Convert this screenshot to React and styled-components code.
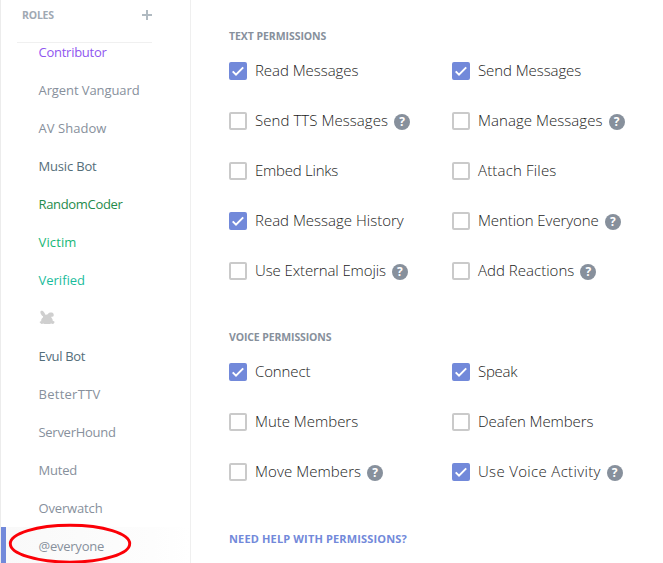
import React from "react";
import styled, { createGlobalStyle } from "styled-components";

const GlobalStyle = createGlobalStyle`
  * { box-sizing: border-box; }
  body {
    margin: 0;
    background: #fff;
    font-family: "Open Sans", "Noto Sans", sans-serif;
    overflow: hidden;
  }
`;

const Page = styled.div`
  display: flex;
  width: 663px;
  height: 563px;
  overflow: hidden;
  background: #fff;
`;

const Sidebar = styled.aside`
  position: relative;
  display: flex;
  flex-direction: column;
  flex: none;
  width: 191px;
  border-left: 1px solid #ececec;
  border-right: 1px solid #efefef;
`;

const SidebarHeader = styled.header`
  display: flex;
  flex: none;
  align-items: flex-start;
  justify-content: space-between;
  width: 135px;
  height: 43px;
  margin-left: 16px;
  padding: 8px 0 0 5px;
  border-bottom: 1px solid #f0f0f0;
`;

const Heading = styled.h2`
  margin: 0;
  font-size: 10.5px;
  line-height: 15px;
  font-weight: 700;
  letter-spacing: ${(p) => p.$track || 0}px;
  color: ${(p) => p.$color || "#87909c"};
  white-space: nowrap;
`;

const AddIcon = styled.svg`
  width: 10px;
  height: 10px;
  margin-top: 2px;
`;

const RoleList = styled.ul`
  flex: 1;
  min-height: 0;
  margin: 0;
  padding: 0;
  overflow: hidden;
  list-style: none;
`;

const Role = styled.li`
  display: flex;
  align-items: center;
  height: 38px;
  padding-left: ${(p) => (p.$active ? 32.5 : 37.5)}px;
  border-left: ${(p) => (p.$active ? "5px solid #7289da" : "none")};
  background: ${(p) =>
    p.$active ? "linear-gradient(90deg, #f9f9f9 0%, #fdfdfd 80%, #fff 100%)" : "none"};
  color: ${(p) => p.$color};
  font-size: 13px;
  line-height: 20px;
  letter-spacing: ${(p) => p.$track || 0}px;
  white-space: nowrap;
  &:first-child {
    margin-top: -10px;
  }
`;

const RabbitIcon = styled.svg`
  width: 16px;
  height: 15px;
  margin-top: -2px;
`;

const Highlight = styled.svg`
  position: absolute;
  left: 7px;
  top: 523px;
  width: 124px;
  height: 41px;
`;

const Content = styled.main`
  flex: 1;
  padding: 29px 0 0 38px;
`;

const Section = styled.section`
  display: flex;
  flex-direction: column;
  height: ${(p) => p.$height}px;
`;

const Grid = styled.div`
  display: grid;
  grid-template-columns: 223px 1fr;
  grid-auto-rows: 50px;
  margin-top: 2px;
`;

const Permission = styled.label`
  display: flex;
  align-items: center;
`;

const Checkbox = styled.span`
  display: flex;
  align-items: center;
  justify-content: center;
  flex: none;
  width: 18px;
  height: 18px;
  margin-right: 8px;
  border: 2px solid ${(p) => (p.$checked ? "#7289da" : "#cacaca")};
  border-radius: 2px;
  background: ${(p) => (p.$checked ? "#7289da" : "#fff")};
`;

const CheckIcon = styled.svg`
  flex: none;
  width: 14px;
  height: 14px;
`;

const Label = styled.span`
  padding-bottom: 2px;
  font-size: 15px;
  line-height: 20px;
  font-weight: 300;
  letter-spacing: ${(p) => p.$track || 0}px;
  color: #1c1c1c;
  white-space: nowrap;
`;

const Help = styled.span`
  flex: none;
  width: 16px;
  height: 16px;
  margin: 2px 0 0 6px;
  border-radius: 50%;
  background: #87909c;
  color: #fff;
  font-size: 12px;
  line-height: 16px;
  font-weight: 700;
  text-align: center;
`;

const HelpLink = styled.a`
  display: block;
  font-size: 11px;
  line-height: 15px;
  font-weight: 700;
  letter-spacing: 0.15px;
  color: #7289da;
  white-space: nowrap;
`;

const roles = [
  { name: "Contributor", color: "#8f56f0", track: -0.26 },
  { name: "Argent Vanguard", color: "#87909c", track: -0.09 },
  { name: "AV Shadow", color: "#87909c", track: 0.05 },
  { name: "Music Bot", color: "#546e7a", track: -0.18 },
  { name: "RandomCoder", color: "#1f8b4c", track: -0.33 },
  { name: "Victim", color: "#18b777", track: 0.13 },
  { name: "Verified", color: "#1abc9c", track: 0 },
  { name: "", color: "#cfcfcf" },
  { name: "Evul Bot", color: "#546e7a", track: -0.34 },
  { name: "BetterTTV", color: "#87909c", track: 0.27 },
  { name: "ServerHound", color: "#87909c", track: -0.28 },
  { name: "Muted", color: "#87909c", track: -0.2 },
  { name: "Overwatch", color: "#87909c", track: -0.15 },
  { name: "@everyone", color: "#87909c", track: -0.24, active: true },
];

const textPermissions = [
  { name: "Read Messages", track: -0.05, checked: true },
  { name: "Send Messages", track: -0.08, checked: true },
  { name: "Send TTS Messages", track: 0.06, help: true },
  { name: "Manage Messages", track: 0.05, help: true },
  { name: "Embed Links", track: -0.24 },
  { name: "Attach Files", track: 0.17 },
  { name: "Read Message History", track: 0, checked: true },
  { name: "Mention Everyone", track: -0.08, help: true },
  { name: "Use External Emojis", track: -0.11, help: true },
  { name: "Add Reactions", track: 0.02, help: true },
];

const voicePermissions = [
  { name: "Connect", track: -0.12, checked: true },
  { name: "Speak", track: -0.25, checked: true },
  { name: "Mute Members", track: -0.02 },
  { name: "Deafen Members", track: -0.1 },
  { name: "Move Members", track: 0.08, help: true },
  { name: "Use Voice Activity", track: 0.33, checked: true, help: true },
];

function PermissionGrid({ items }) {
  return (
    <Grid>
      {items.map((item) => (
        <Permission key={item.name}>
          <Checkbox $checked={item.checked}>
            {item.checked && (
              <CheckIcon viewBox="0 0 14 14">
                <path d="M1.7 7.4 5 10.6 12.2 3.4" fill="none" stroke="#fff" strokeWidth="2" />
              </CheckIcon>
            )}
          </Checkbox>
          <Label $track={item.track}>{item.name}</Label>
          {item.help && <Help>?</Help>}
        </Permission>
      ))}
    </Grid>
  );
}

function Rabbit() {
  return (
    <RabbitIcon viewBox="0 0 16 15">
      <path
        fill="#cfcfcf"
        d="M1.6 1.2C2.6.2 4.4.9 5.2 2.4L6.7 5.1C7.4 4.5 8.2 4.4 8.8 4.3 9.3 2.9 11 2.3 12.6 2.6 14.2 2.8 15 4 14.7 5.6 14.5 6.8 13.5 7 12.6 6.6L12.3 7.6C13.5 8.8 13.8 10 13.8 11.1 15.3 10.9 15.9 12 15.2 12.9 14.6 14 13.4 14.2 12.3 13.6L10.8 13.9 5.4 13.9 4.2 13.6C3.2 14.2 1.8 14 1.4 13 .2 12.4.4 11.1 2.2 11.2 2 9.6 2.7 8.4 3.9 7.6L4.1 6.3C2.6 5.4.7 2.8 1.6 1.2Z"
      />
    </RabbitIcon>
  );
}

export default function App() {
  return (
    <Page>
      <GlobalStyle />
      <Sidebar>
        <SidebarHeader>
          <Heading $track={-0.2} $color="#9fa9b3">ROLES</Heading>
          <AddIcon viewBox="0 0 10 10">
            <path d="M5 0V10M0 5H10" stroke="#b0bac1" strokeWidth="2" />
          </AddIcon>
        </SidebarHeader>
        <RoleList>
          {roles.map((role) => (
            <Role
              key={role.name || "rabbit"}
              $color={role.color}
              $track={role.track}
              $active={role.active}
            >
              {role.name || <Rabbit />}
            </Role>
          ))}
        </RoleList>
        <Highlight viewBox="0 0 124 41">
          <ellipse cx="62" cy="20.7" rx="59.7" ry="18.4" fill="none" stroke="#fb0007" strokeWidth="2.9" />
        </Highlight>
      </Sidebar>
      <Content>
        <Section $height={301}>
          <Heading $track={-0.06}>TEXT PERMISSIONS</Heading>
          <PermissionGrid items={textPermissions} />
        </Section>
        <Section $height={201}>
          <Heading $track={-0.12}>VOICE PERMISSIONS</Heading>
          <PermissionGrid items={voicePermissions} />
        </Section>
        <HelpLink>NEED HELP WITH PERMISSIONS?</HelpLink>
      </Content>
    </Page>
  );
}
